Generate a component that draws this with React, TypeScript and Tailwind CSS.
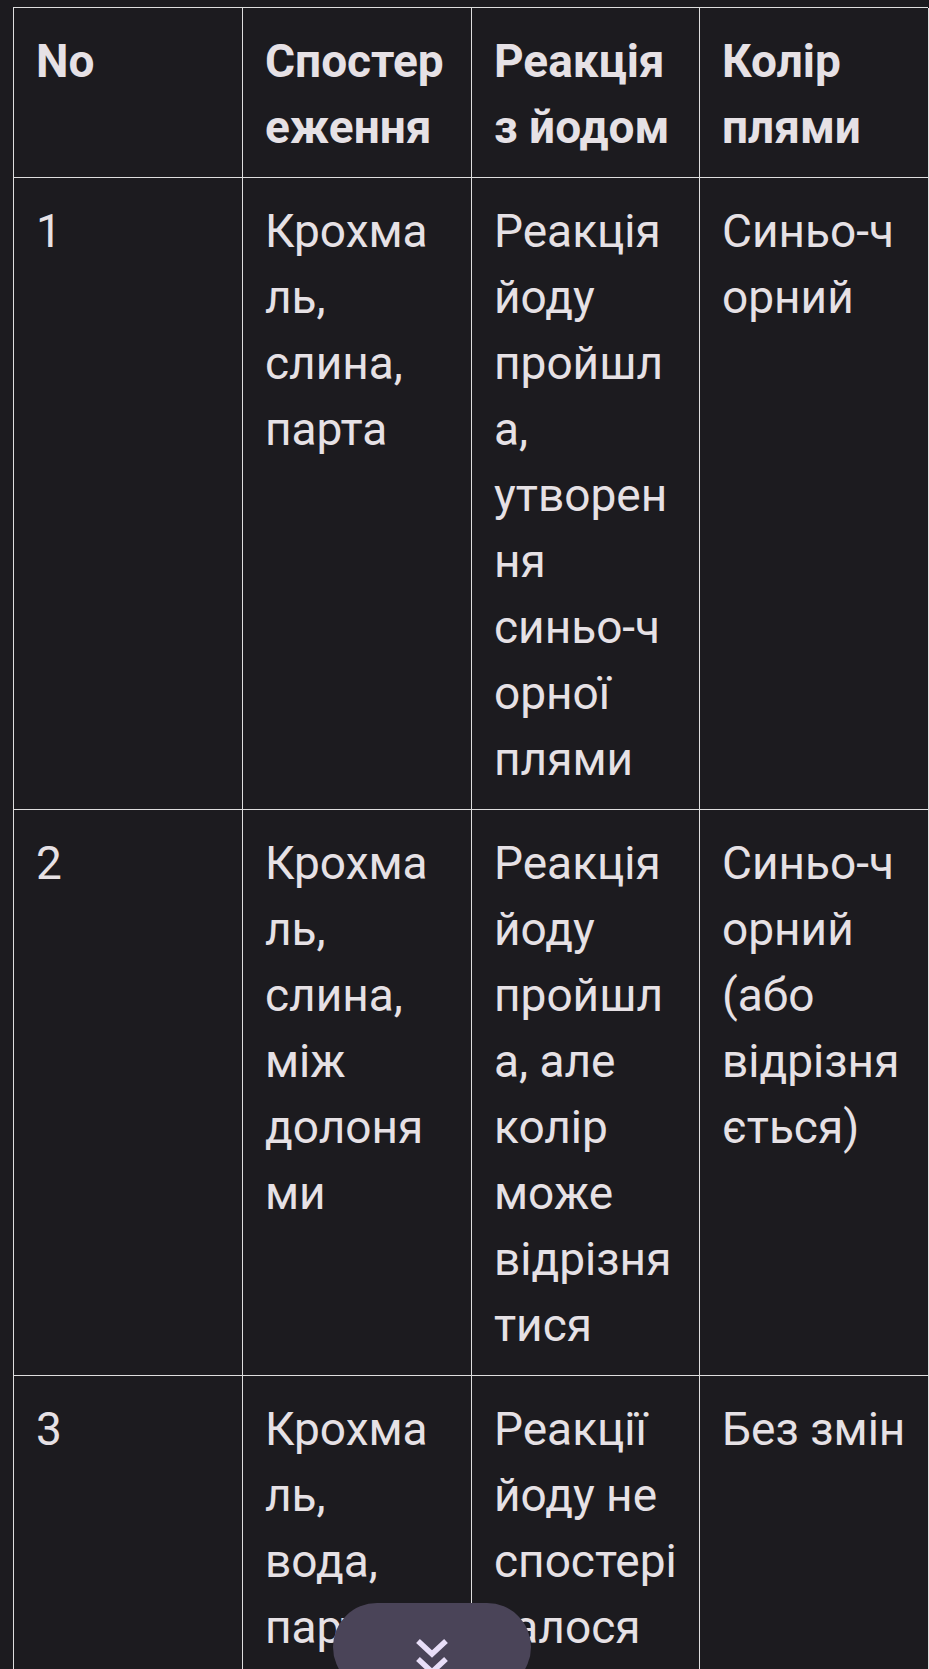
// each cell is given line by line, as the narrow columns wrap it
const header = [["No"], ["Спостер", "еження"], ["Реакція", "з йодом"], ["Колір", "плями"]];

const rows = [
  [
    ["1"],
    ["Крохма", "ль,", "слина,", "парта"],
    ["Реакція", "йоду", "пройшл", "а,", "утворен", "ня", "синьо-ч", "орної", "плями"],
    ["Синьо-ч", "орний"],
  ],
  [
    ["2"],
    ["Крохма", "ль,", "слина,", "між", "долоня", "ми"],
    ["Реакція", "йоду", "пройшл", "а, але", "колір", "може", "відрізня", "тися"],
    ["Синьо-ч", "орний", "(або", "відрізня", "ється)"],
  ],
  [
    ["3"],
    ["Крохма", "ль,", "вода,", "парта"],
    ["Реакції", "йоду не", "спостері", "галося"],
    ["Без змін"],
  ],
];

const cell =
  "border-r border-b border-[#dedede] pl-[22px] pr-[12px] pt-[20px] pb-[17px] whitespace-nowrap overflow-hidden";

function Lines({ lines }: { lines: string[] }) {
  return (
    <>
      {lines.map((l, i) => (
        <span key={i} className="block">
          {l}
        </span>
      ))}
    </>
  );
}

export default function App() {
  return (
    <div
      className="relative h-[1669px] overflow-hidden bg-[#1c1b1f] pt-[7px] pl-[13px] text-[#e6e1e5]"
      style={{ fontFamily: "Roboto, 'Noto Sans', sans-serif" }}
    >
      {/* Table */}
      <div className="grid w-[915px] grid-cols-[229px_229px_228px_229px] border-l border-t border-[#dedede] text-[46px] leading-[66px]">
        {header.map((h, j) => (
          <div key={j} className={`${cell} font-bold`}>
            <Lines lines={h} />
          </div>
        ))}
        {rows.map((row, i) =>
          row.map((c, j) => (
            <div key={`${i}-${j}`} className={cell}>
              <Lines lines={c} />
            </div>
          ))
        )}
      </div>

      {/* Scroll-down button */}
      <button className="absolute bottom-[-22px] left-[333px] flex h-[88px] w-[198px] justify-center rounded-[44px] bg-[#4a4458] pt-[34px]">
        <svg width="36" height="40" viewBox="0 0 36 40" fill="none">
          <path d="M4 4 L18 17 L32 4" stroke="#e8def8" strokeWidth="5.5" />
          <path d="M4 22 L18 35 L32 22" stroke="#e8def8" strokeWidth="5.5" />
        </svg>
      </button>
    </div>
  );
}
